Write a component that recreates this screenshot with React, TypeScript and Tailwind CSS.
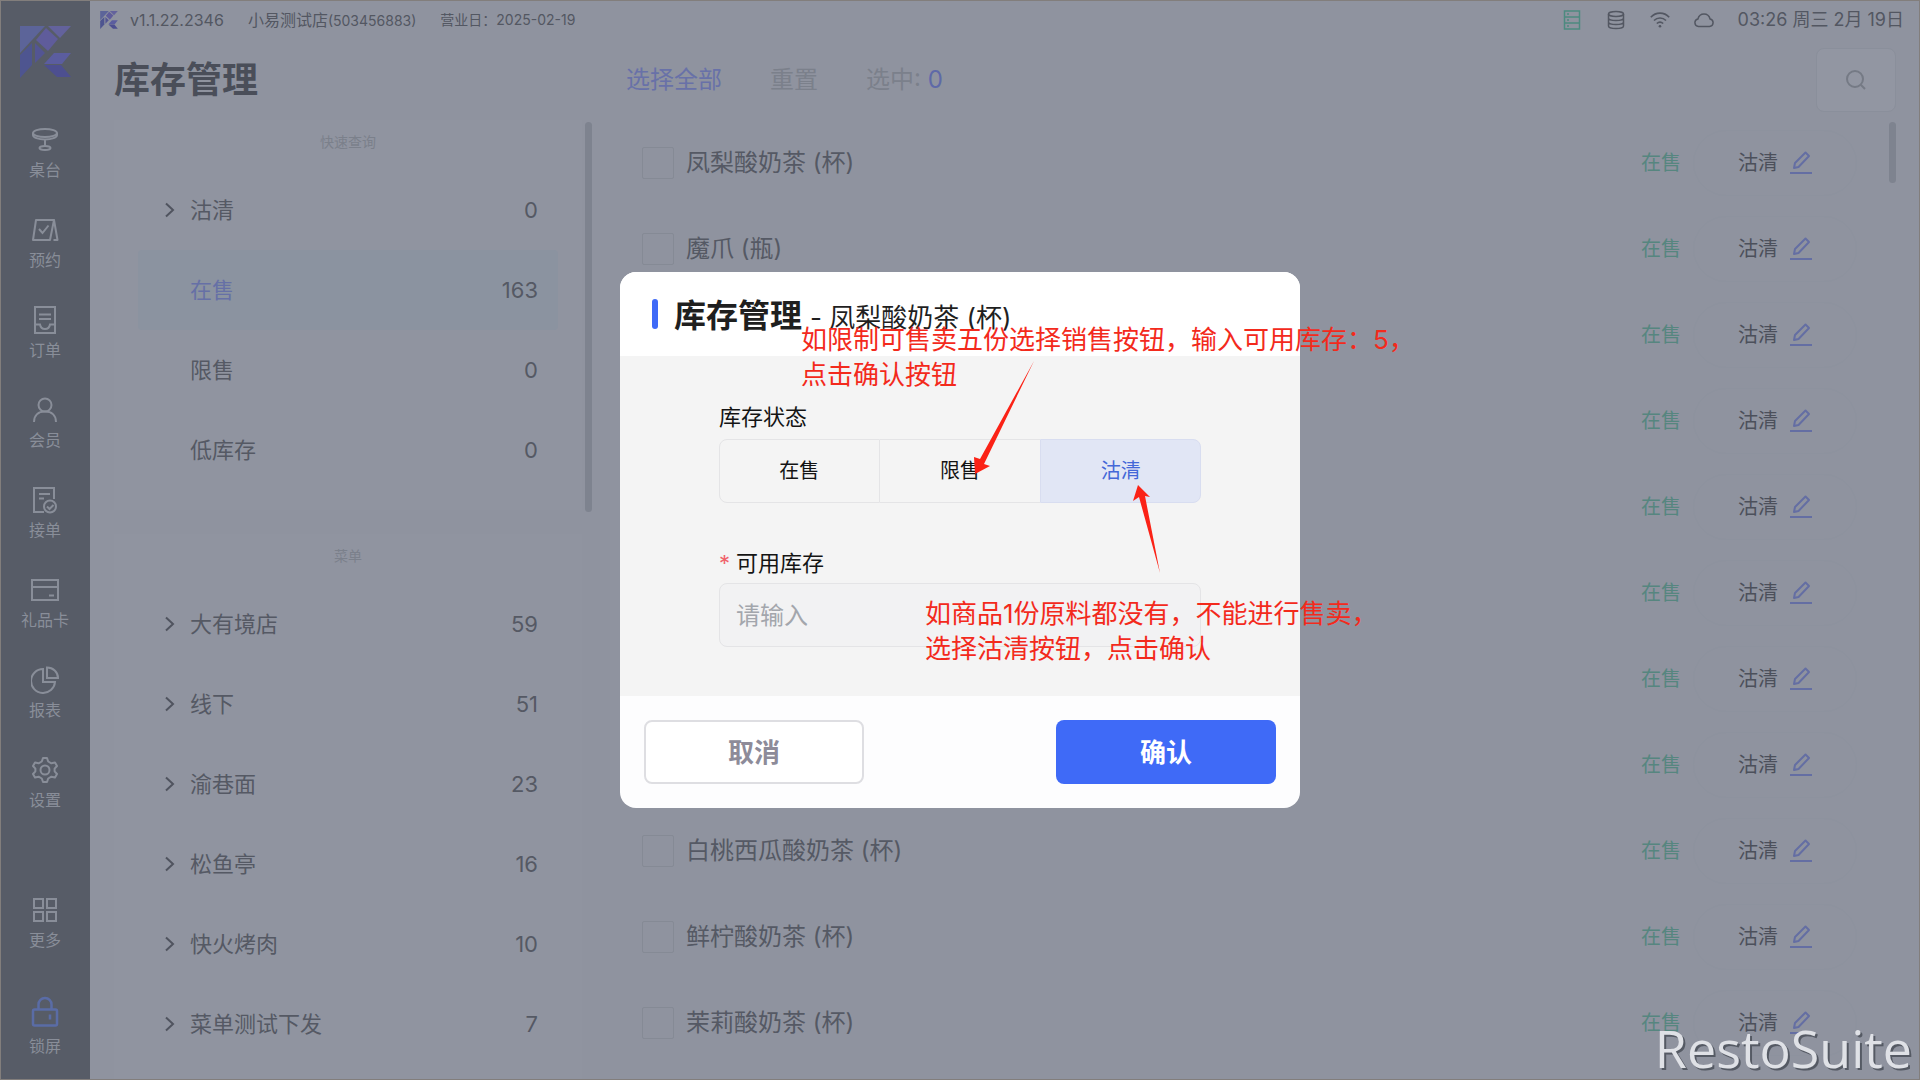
import type { ReactNode } from 'react'

const stroke = {
  fill: 'none',
  stroke: 'currentColor',
  strokeWidth: 2,
} as const

function Logo({ className }: { className: string }) {
  return (
    <svg viewBox="0 0 51 52" className={className} aria-hidden="true">
      <path d="M0 0H25L0 27Z" fill="#5c6499" />
      <path d="M28 0H51L40 12Z" fill="#63629c" />
      <path d="M26 2L38 13L28 25L16 14Z" fill="#5f5c9b" />
      <path d="M12 17L0 29V52L12 39Z" fill="#4e5590" />
      <path d="M15 17L25 27L15 37Z" fill="#535593" />
      <path d="M34 27H51L42 38H24Z" fill="#5b5d9f" />
      <path d="M24 39H41L51 51H37Z" fill="#4d4f90" />
    </svg>
  )
}

const navIcons: Record<string, ReactNode> = {
  桌台: (
    <g {...stroke}>
      <ellipse cx="14" cy="7" rx="12" ry="4" />
      <path d="M2 7v2c0 2.400 5 4.500 12 4.500s12-2.100 12-4.500V7M14 13.500v7" />
      <ellipse cx="14" cy="22" rx="5.500" ry="2" />
    </g>
  ),
  预约: (
    <g {...stroke}>
      <path d="M5 4h18l-4 20H2zM23 4l3.500 20H22.500" strokeLinejoin="round" />
      <path d="M8 13l3.500 4 6-7.500" />
    </g>
  ),
  订单: (
    <g {...stroke}>
      <path d="M4 1h20v26H4zM8 8.500h12M8 13h12M4 18.500h5c1 6 9 6 10 0h5" />
    </g>
  ),
  会员: (
    <g {...stroke}>
      <circle cx="14" cy="9" r="6.500" />
      <path d="M3 26c0-7 4.500-10.500 11-10.500s11 3.500 11 10.500" />
    </g>
  ),
  接单: (
    <g {...stroke}>
      <path d="M13 26H3V2h20v11M8 8h11M8 12.500h5" />
      <circle cx="19" cy="20.500" r="6" />
      <path d="M16 20.500l2.500 2.500 4-4" />
    </g>
  ),
  礼品卡: (
    <g {...stroke}>
      <path d="M1 4h26v20H1zM1 11h26M18 19.500h5" />
    </g>
  ),
  报表: (
    <g {...stroke}>
      <path d="M12 3a12 12 0 1 0 12 13H12z" />
      <path d="M16 1.500c6 0 11 4.500 11 10.500H16z" />
    </g>
  ),
  设置: (
    <g {...stroke}>
      <path
        strokeLinejoin="round"
        d="M12 2h4l1.200 3.500 3.200 1.800 3.600-.8 2 3.500-2.400 2.700v2.600L26 18l-2 3.500-3.600-.8-3.200 1.800L16 26h-4l-1.200-3.500-3.200-1.800-3.600.8L2 18l2.400-2.700v-2.600L2 10l2-3.500 3.600.8 3.200-1.800z"
      />
      <circle cx="14" cy="14" r="4.500" />
    </g>
  ),
  更多: (
    <g {...stroke}>
      <path d="M3 3h9v9H3zM16 3h9v9h-9zM3 16h9v9H3zM16 16h9v9h-9z" />
    </g>
  ),
  锁屏: (
    <g {...stroke} strokeWidth={2.500}>
      <rect x="2" y="13" width="24" height="16" rx="1.500" />
      <path d="M7.500 13V8a6.500 6.500 0 0 1 13 0v5M19 18v5" />
    </g>
  ),
}

function NavItem({ label, accent }: { label: string; accent?: boolean }) {
  return (
    <button
      type="button"
      className={
        accent
          ? 'flex w-full flex-col items-center gap-2 text-[#898e99]'
          : 'flex w-full flex-col items-center gap-1.5 text-[#898e99]'
      }
    >
      <svg
        viewBox={accent ? '0 0 28 31' : '0 0 28 28'}
        className={accent ? 'h-8 w-7 text-[#5a6ca6]' : 'size-7'}
        aria-hidden="true"
      >
        {navIcons[label]}
      </svg>
      <span className="text-base leading-5">{label}</span>
    </button>
  )
}

function Chevron() {
  return (
    <svg viewBox="0 0 12 16" className="h-4 w-3 text-[#50545f]" aria-hidden="true">
      <path d="M2 1.500L9 8l-7 6.500" {...stroke} />
    </svg>
  )
}

type Entry = { name: string; count: number; expandable?: boolean; active?: boolean }

const quick: Entry[] = [
  { name: '沽清', count: 0, expandable: true },
  { name: '在售', count: 163, active: true },
  { name: '限售', count: 0 },
  { name: '低库存', count: 0 },
]

const menus: Entry[] = [
  { name: '大有境店', count: 59, expandable: true },
  { name: '线下', count: 51, expandable: true },
  { name: '渝巷面', count: 23, expandable: true },
  { name: '松鱼亭', count: 16, expandable: true },
  { name: '快火烤肉', count: 10, expandable: true },
  { name: '菜单测试下发', count: 7, expandable: true },
]

function EntryList({ title, entries }: { title: string; entries: Entry[] }) {
  return (
    <section className="flex flex-col bg-[#9094a0] px-6 pb-5">
      <h2 className="pt-3 text-center text-sm leading-5 text-[#7b808b]">{title}</h2>
      <ul className="mt-[18px]">
        {entries.map((e) => (
          <li key={e.name}>
            <button
              type="button"
              className={
                e.active
                  ? 'flex h-20 w-full items-center rounded bg-[#8b93a0] px-5 text-[22px]'
                  : 'flex h-20 w-full items-center px-5 text-[22px]'
              }
            >
              <span className="flex w-8 pl-1.5">{e.expandable && <Chevron />}</span>
              <span className={e.active ? 'text-[#6670a6]' : 'text-[#555964]'}>{e.name}</span>
              <span className="ml-auto text-[#555964]">{e.count}</span>
            </button>
          </li>
        ))}
      </ul>
    </section>
  )
}

const products = [
  '凤梨酸奶茶 (杯)',
  '魔爪 (瓶)',
  '',
  '',
  '',
  '',
  '',
  '',
  '白桃西瓜酸奶茶 (杯)',
  '鲜柠酸奶茶 (杯)',
  '茉莉酸奶茶 (杯)',
]

function ProductRow({ name }: { name: string }) {
  return (
    <li className="flex h-[86px] shrink-0 items-center">
      <label className="flex items-center gap-3 text-2xl text-[#555964]">
        <input
          type="checkbox"
          className="size-8 appearance-none rounded-xs border border-[#858a95]"
        />
        {name}
      </label>
      <span className="ml-auto text-xl text-[#56867f]">在售</span>
      <button
        type="button"
        className="ml-3 flex h-[66px] w-[164px] items-center justify-center gap-3 rounded-full border border-[#8d929e] text-xl text-[#4c505b]"
      >
        沽清
        <svg viewBox="0 0 22 24" className="h-6 w-[22px] text-[#646ea3]" aria-hidden="true">
          <path d="M0 22h22" {...stroke} />
          <path d="M4 17l1-5L15.500 1.500l3.500 3.500L8.500 16z" strokeLinejoin="round" {...stroke} />
        </svg>
      </button>
    </li>
  )
}

function TopBar() {
  return (
    <header className="flex h-10 items-center pr-4 pl-2.5 text-[#535762]">
      <Logo className="size-[18px]" />
      <span className="ml-3 text-base">v1.1.22.2346</span>
      <span className="ml-6 text-base">
        小易测试店<span className="text-sm">(503456883)</span>
      </span>
      <span className="ml-6 text-sm">营业日：2025-02-19</span>
      <div className="ml-auto flex items-center gap-6">
        <svg viewBox="0 0 20 20" className="size-5 text-[#4d8a80]" aria-hidden="true">
          <path
            d="M2.500 1h15v18h-15zM2.500 7h15M2.500 13h15M5 4h2M5 10h2M5 16h2"
            {...stroke}
            strokeWidth={1.500}
          />
        </svg>
        <svg viewBox="0 0 20 20" className="size-5" aria-hidden="true">
          <g {...stroke} strokeWidth={1.500}>
            <ellipse cx="10" cy="4" rx="7.500" ry="2.500" />
            <path d="M2.500 4v12c0 1.400 3.400 2.500 7.500 2.500s7.500-1.100 7.500-2.500V4M2.500 8c0 1.400 3.400 2.500 7.500 2.500s7.500-1.100 7.500-2.500M2.500 12c0 1.400 3.400 2.500 7.500 2.500s7.500-1.100 7.500-2.500" />
          </g>
        </svg>
        <svg viewBox="0 0 20 20" className="size-5" aria-hidden="true">
          <path
            d="M.8 7.200c5-5.400 13.400-5.400 18.400 0M4 10.500c3.300-3.400 8.700-3.400 12 0M6.800 13.500c1.900-1.700 4.500-1.700 6.400 0"
            {...stroke}
            strokeWidth={1.600}
          />
          <circle cx="10" cy="16.300" r="1.300" fill="currentColor" />
        </svg>
        <svg viewBox="0 0 20 20" className="size-5" aria-hidden="true">
          <path
            d="M4.500 16.500a3.800 3.800 0 0 1-.6-7.500c.8-3 3.200-5 6.100-5s5.300 2 6.100 5a3.800 3.800 0 0 1-.6 7.500z"
            {...stroke}
            strokeWidth={1.500}
          />
        </svg>
        <time className="text-lg">03:26 周三 2月 19日</time>
      </div>
    </header>
  )
}

function StockDialog() {
  return (
    <div
      role="dialog"
      aria-labelledby="dialog-title"
      className="relative w-[680px] rounded-2xl bg-[#fdfdfe]"
    >
      <header className="flex h-[84px] items-center rounded-t-2xl bg-white pl-8">
        <span className="h-[30px] w-1.5 rounded-full bg-[#3f6af7]" />
        <div className="ml-4 flex items-baseline gap-2 pt-1 text-[#1f1f1f]">
          <h2 id="dialog-title" className="text-[32px] font-bold">
            库存管理
          </h2>
          <span className="text-[26px]">- 凤梨酸奶茶 (杯)</span>
        </div>
      </header>
      <form className="h-[340px] bg-[#f4f4f4] px-[99px] pt-[45px] text-[#141414]">
        <fieldset>
          <legend className="text-[22px] leading-8">库存状态</legend>
          <div className="mt-1.5 grid h-16 grid-cols-3 text-xl">
            <button type="button" className="rounded-l-lg border border-[#e4e4e6]">
              在售
            </button>
            <button type="button" className="border-y border-[#e4e4e6]">
              限售
            </button>
            <button
              type="button"
              className="rounded-r-lg border border-[#d8ddf0] bg-[#e1e6f5] text-[#4468d8]"
            >
              沽清
            </button>
          </div>
        </fieldset>
        <label htmlFor="stock" className="mt-11 flex gap-1.5 text-[22px] leading-8">
          <span className="text-[#f0626a]">*</span>可用库存
        </label>
        <input
          id="stock"
          type="text"
          placeholder="请输入"
          className="mt-1 h-16 w-full rounded-lg border border-[#e4e4e6] bg-[#f2f2f3] px-4 text-2xl placeholder:text-[#a3a6ac]"
        />
      </form>
      <footer className="flex h-28 items-center justify-between px-6 text-[26px] font-bold">
        <button
          type="button"
          className="h-16 w-[220px] rounded-lg border-2 border-[#dedee2] bg-white text-[#8d8b99]"
        >
          取消
        </button>
        <button type="button" className="h-16 w-[220px] rounded-lg bg-[#3f6af7] text-white">
          确认
        </button>
      </footer>

      <p className="absolute top-[50px] left-[181px] text-[26px] leading-[35px] whitespace-nowrap text-[#f32a1c]">
        如限制可售卖五份选择销售按钮，输入可用库存：5，
        <br />
        点击确认按钮
      </p>
      <p className="absolute top-[324px] left-[305px] text-[26px] leading-[35px] whitespace-nowrap text-[#f32a1c]">
        如商品1份原料都没有，不能进行售卖，
        <br />
        选择沽清按钮，点击确认
      </p>
      <svg
        viewBox="0 0 200 220"
        className="pointer-events-none absolute top-[84px] left-[350px] h-[220px] w-[200px] text-[#fb2216]"
        aria-hidden="true"
      >
        <path d="M64 5L10 103L4 101L5 118L20 110L14 108Z" fill="currentColor" />
        <path d="M190 217L169 141L163 145L168 129L180 141L175 140Z" fill="currentColor" />
      </svg>
    </div>
  )
}

export default function App() {
  return (
    <div className="relative flex h-screen overflow-hidden bg-[#8f939f] font-['Inter','Noto_Sans_CJK_SC',sans-serif]">
      <nav className="flex w-[90px] shrink-0 flex-col items-center bg-[#575c67] pb-6">
        <Logo className="mt-[26px] h-[52px] w-[51px]" />
        <div className="mt-12 flex w-full flex-col gap-9">
          {['桌台', '预约', '订单', '会员', '接单', '礼品卡', '报表', '设置'].map((l) => (
            <NavItem key={l} label={l} />
          ))}
        </div>
        <div className="mt-auto flex w-full flex-col gap-[46px]">
          <NavItem label="更多" />
          <NavItem label="锁屏" accent />
        </div>
      </nav>
      <div className="flex min-w-0 flex-1 flex-col">
        <TopBar />
        <main className="flex min-h-0 flex-1 pr-6 pl-6">
          <div className="flex w-[478px] shrink-0 flex-col">
            <h1 className="flex h-20 items-center text-4xl font-bold text-[#4a4e59]">库存管理</h1>
            <div className="flex min-h-0 flex-1 justify-between">
              <div className="flex w-[468px] flex-col gap-6">
                <EntryList title="快速查询" entries={quick} />
                <EntryList title="菜单" entries={menus} />
              </div>
              <span className="mt-0.5 h-[390px] w-[7px] rounded-full bg-[#7e838f]" />
            </div>
          </div>
          <div className="ml-[34px] flex min-w-0 flex-1 flex-col">
            <div className="flex h-20 items-center gap-12 text-2xl text-[#7b808b]">
              <button type="button" className="text-[#6871a8]">
                选择全部
              </button>
              <button type="button">重置</button>
              <span>
                选中: <span className="text-[#5e69a8]">0</span>
              </span>
              <button
                type="button"
                aria-label="搜索"
                className="ml-auto flex h-16 w-20 items-center justify-center rounded-lg border border-[#8a8f9b] bg-[#9296a2]"
              >
                <svg viewBox="0 0 20 20" className="size-5 text-[#757a85]" aria-hidden="true">
                  <circle cx="9" cy="9" r="8" {...stroke} />
                  <path d="M15 15l4 4" {...stroke} />
                </svg>
              </button>
            </div>
            <div className="flex min-h-0 flex-1 overflow-hidden">
              <ul className="flex min-w-0 flex-1 flex-col pr-8 pl-4">
                {products.map((p, i) => (
                  <ProductRow key={i} name={p} />
                ))}
              </ul>
              <span className="mt-0.5 h-[61px] w-[7px] shrink-0 rounded-full bg-[#7e838f]" />
            </div>
          </div>
        </main>
      </div>
      <div className="pointer-events-none absolute inset-0 border border-[#827e7c]" />
      <div className="absolute inset-0 flex items-center justify-center">
        <StockDialog />
      </div>
      <span className="absolute right-2 bottom-0.5 font-['Open_Sans',sans-serif] text-[52px] leading-[60px] text-[#dfe1e6] drop-shadow-[2px_2px_0_#555a64]">
        RestoSuite
      </span>
    </div>
  )
}
